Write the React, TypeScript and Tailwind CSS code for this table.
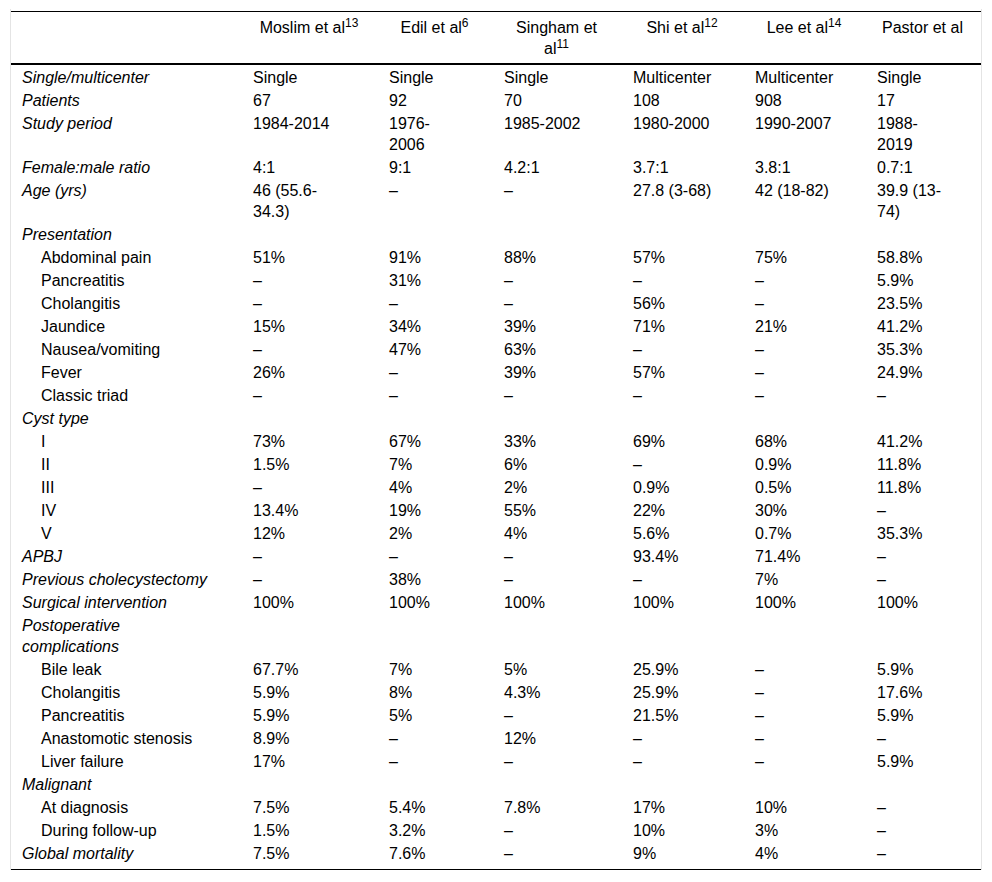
import React from "react";

type Row = {
  label: React.ReactNode;
  sub?: boolean;
  values?: React.ReactNode[];
};

const dash = "–";

const rows: Row[] = [
  { label: "Single/multicenter", values: ["Single", "Single", "Single", "Multicenter", "Multicenter", "Single"] },
  { label: "Patients", values: ["67", "92", "70", "108", "908", "17"] },
  {
    label: "Study period",
    values: [
      "1984-2014",
      <>1976-<br />2006</>,
      "1985-2002",
      "1980-2000",
      "1990-2007",
      <>1988-<br />2019</>,
    ],
  },
  { label: "Female:male ratio", values: ["4:1", "9:1", "4.2:1", "3.7:1", "3.8:1", "0.7:1"] },
  {
    label: "Age (yrs)",
    values: [
      <>46 (55.6-<br />34.3)</>,
      dash,
      dash,
      "27.8 (3-68)",
      "42 (18-82)",
      <>39.9 (13-<br />74)</>,
    ],
  },
  { label: "Presentation" },
  { label: "Abdominal pain", sub: true, values: ["51%", "91%", "88%", "57%", "75%", "58.8%"] },
  { label: "Pancreatitis", sub: true, values: [dash, "31%", dash, dash, dash, "5.9%"] },
  { label: "Cholangitis", sub: true, values: [dash, dash, dash, "56%", dash, "23.5%"] },
  { label: "Jaundice", sub: true, values: ["15%", "34%", "39%", "71%", "21%", "41.2%"] },
  { label: "Nausea/vomiting", sub: true, values: [dash, "47%", "63%", dash, dash, "35.3%"] },
  { label: "Fever", sub: true, values: ["26%", dash, "39%", "57%", dash, "24.9%"] },
  { label: "Classic triad", sub: true, values: [dash, dash, dash, dash, dash, dash] },
  { label: "Cyst type" },
  { label: "I", sub: true, values: ["73%", "67%", "33%", "69%", "68%", "41.2%"] },
  { label: "II", sub: true, values: ["1.5%", "7%", "6%", dash, "0.9%", "11.8%"] },
  { label: "III", sub: true, values: [dash, "4%", "2%", "0.9%", "0.5%", "11.8%"] },
  { label: "IV", sub: true, values: ["13.4%", "19%", "55%", "22%", "30%", dash] },
  { label: "V", sub: true, values: ["12%", "2%", "4%", "5.6%", "0.7%", "35.3%"] },
  { label: "APBJ", values: [dash, dash, dash, "93.4%", "71.4%", dash] },
  { label: "Previous cholecystectomy", values: [dash, "38%", dash, dash, "7%", dash] },
  { label: "Surgical intervention", values: ["100%", "100%", "100%", "100%", "100%", "100%"] },
  { label: <>Postoperative<br />complications</> },
  { label: "Bile leak", sub: true, values: ["67.7%", "7%", "5%", "25.9%", dash, "5.9%"] },
  { label: "Cholangitis", sub: true, values: ["5.9%", "8%", "4.3%", "25.9%", dash, "17.6%"] },
  { label: "Pancreatitis", sub: true, values: ["5.9%", "5%", dash, "21.5%", dash, "5.9%"] },
  { label: "Anastomotic stenosis", sub: true, values: ["8.9%", dash, "12%", dash, dash, dash] },
  { label: "Liver failure", sub: true, values: ["17%", dash, dash, dash, dash, "5.9%"] },
  { label: "Malignant" },
  { label: "At diagnosis", sub: true, values: ["7.5%", "5.4%", "7.8%", "17%", "10%", dash] },
  { label: "During follow-up", sub: true, values: ["1.5%", "3.2%", dash, "10%", "3%", dash] },
  { label: "Global mortality", values: ["7.5%", "7.6%", dash, "9%", "4%", dash] },
];

const headers: React.ReactNode[] = [
  <>Moslim et al<sup>13</sup></>,
  <>Edil et al<sup>6</sup></>,
  <>Singham et<br />al<sup>11</sup></>,
  <>Shi et al<sup>12</sup></>,
  <>Lee et al<sup>14</sup></>,
  "Pastor et al",
];

const widths = ["w-[231px]", "w-[136px]", "w-[115px]", "w-[129px]", "w-[122px]", "w-[122px]", "w-[115px]"];

export default function App() {
  return (
    <div className="min-h-[882px] bg-white px-[10px] pt-[9px] font-['Liberation_Sans',Arial,sans-serif] text-[16px] leading-[21px] text-black">
      <div className="border-x border-[#e4e4e4] pt-[2px]">
        <table className="w-[970px] table-fixed border-separate border-spacing-0 border-y border-black">
          <colgroup>
            {widths.map((w, i) => (
              <col key={i} className={w} />
            ))}
          </colgroup>
          <thead>
            <tr>
              <th className="border-b-2 border-black pt-[5px] pb-[4px]" />
              {headers.map((h, i) => (
                <th
                  key={i}
                  className="border-b-2 border-black pt-[5px] pb-[4px] pl-[11px] pr-[13px] text-center align-top font-normal whitespace-nowrap"
                >
                  {h}
                </th>
              ))}
            </tr>
          </thead>
          <tbody>
            {rows.map((r, i) => {
              const last = i === rows.length - 1;
              const pad = last ? "pt-[2px] pb-[5px]" : "pt-[2px]";
              return (
                <tr key={i}>
                  <td
                    className={`${pad} pr-[8px] align-top whitespace-nowrap ${
                      r.sub ? "pl-[30px]" : "pl-[11px] italic"
                    }`}
                  >
                    {r.label}
                  </td>
                  {(r.values ?? ["", "", "", "", "", ""]).map((v, j) => (
                    <td key={j} className={`${pad} pl-[11px] pr-[4px] align-top whitespace-nowrap`}>
                      {v}
                    </td>
                  ))}
                </tr>
              );
            })}
          </tbody>
        </table>
      </div>
    </div>
  );
}
